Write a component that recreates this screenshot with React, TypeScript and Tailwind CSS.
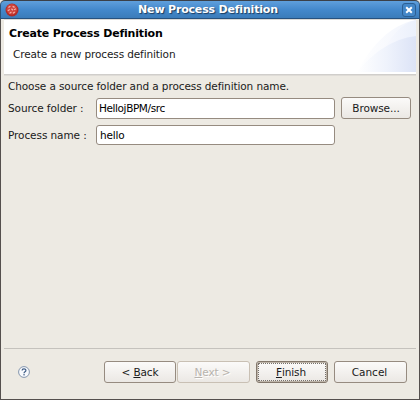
import React from "react";

const BTN =
  "flex h-[22px] shrink-0 items-center justify-center rounded-[3px] border bg-linear-to-b from-[#fbfaf9] to-[#ebe8e4] leading-none whitespace-pre";

function AppIcon() {
  return (
    <svg width="14" height="14" viewBox="0 0 14 14" className="block">
      <circle cx="7" cy="7" r="6.5" fill="#b02c28" />
      <circle cx="6.8" cy="6.3" r="5.2" fill="#d0453e" />
      <path d="M3.4 4.6 5.4 3.2M7.6 3.4 9.6 4.4M2.8 7.8 4.8 6.6M6.4 5.8 8 7.2M9 6.8 11 5.8M4.6 10.4 6.4 9M8 10.2 9.8 9" fill="none" stroke="#f2b3ad" strokeWidth="1.2" />
    </svg>
  );
}

function TitleBar() {
  return (
    <div className="flex h-[19px] shrink-0 items-center rounded-t-[5px] border-x border-t border-b border-x-[#2d5278] border-t-[#3b4048] border-b-[#27527f] bg-linear-to-b from-[#5f9fdc] via-[#4489cc] to-[#3b7cba] pr-[3px] pl-1">
      <AppIcon />
      <div className="flex-1 pr-[5px] text-center text-[11px] leading-[18px] font-bold tracking-[-0.18px] text-white [text-shadow:1px_1px_1px_#1c3c5e]">
        New Process Definition
      </div>
      <div className="flex h-[14px] w-[14px] items-center justify-center rounded-[3px] border border-[#2c5f93] bg-[#4387c8]">
        <svg width="8" height="8" viewBox="0 0 8 8">
          <path d="M1.2 1.2 6.8 6.8M6.8 1.2 1.2 6.8" stroke="#fff" strokeWidth="2" />
        </svg>
      </div>
    </div>
  );
}

function Banner() {
  return (
    <div className="flex h-[55px] shrink-0 justify-between border-t border-[#dcdad6] bg-white">
      <div className="pt-[7px] pl-[5px] leading-[13px]">
        <div className="text-[11px] font-bold tracking-[-0.18px] text-black">Create Process Definition</div>
        <div className="pt-2 pl-1 tracking-[-0.12px]">Create a new process definition</div>
      </div>
      <svg width="60" height="52" viewBox="0 0 60 52" className="block">
        <defs>
          <linearGradient id="outer" x1="0" x2="1">
            <stop offset="0" stopColor="#fff" />
            <stop offset="1" stopColor="#f1f4fc" />
          </linearGradient>
          <linearGradient id="middle" x1="0" x2="1">
            <stop offset="0" stopColor="#f8f9fe" />
            <stop offset="1" stopColor="#ebf0fb" />
          </linearGradient>
          <linearGradient id="inner" x1="0" x2="1">
            <stop offset="0" stopColor="#fff" />
            <stop offset=".5" stopColor="#eff3fc" />
            <stop offset="1" stopColor="#dce3f6" />
          </linearGradient>
        </defs>
        <path d="M1 52C15 26 34 5 60 0V52Z" fill="url(#outer)" />
        <path d="M28 30C36 15 45 4 60 0V34Z" fill="url(#middle)" />
        <path d="M1 52C18 32 36 19 60 16V52Z" fill="url(#inner)" />
      </svg>
    </div>
  );
}

function HelpIcon() {
  return (
    <svg width="12" height="12" viewBox="0 0 12 12" className="block">
      <circle cx="6" cy="6" r="5.4" fill="#f8fafd" stroke="#8495ad" strokeWidth="1" />
      <path d="M4.1 4.6C4.1 2.4 7.9 2.4 7.9 4.5 7.9 5.8 6 5.8 6 7.3" fill="none" stroke="#3d5b85" strokeWidth="1.2" />
      <rect x="5.4" y="8.1" width="1.3" height="1.3" fill="#3d5b85" />
    </svg>
  );
}

function Field({ label, children }: { label: string; children: React.ReactNode }) {
  return (
    <div className="flex items-center">
      <label className="w-[88px] leading-[13px] tracking-[-0.08px] whitespace-pre">{label}</label>
      {children}
    </div>
  );
}

const INPUT =
  "w-[239px] rounded-[3px] border border-[#968b80] bg-white px-[2px] text-black outline-none";

export default function App() {
  return (
    <div className="h-[400px] w-[420px] overflow-hidden bg-[#edeae3] font-['DejaVu_Sans',sans-serif] text-[10.5px] text-[#1a1a1a]">
      <div className="flex h-full flex-col">
        <TitleBar />
        <div className="flex min-h-0 flex-1 flex-col border-x border-b border-[#55504e] px-[3px]">
          <Banner />
          <div className="h-[2px] shrink-0 border-t border-[#d0cecb] bg-[#dfdcd7]" />
          <div className="flex-1 pt-[4px] pl-1">
            <div className="h-[17px] leading-[13px] tracking-[-0.1px] whitespace-nowrap">
              Choose a source folder and a process definition name.
            </div>
            <div className="flex h-[22px] items-center gap-[6px]">
              <Field label="Source folder :">
                <input readOnly value="HellojBPM/src" className={`${INPUT} h-[21px] tracking-[-0.4px]`} />
              </Field>
              <button className={`${BTN} w-[70px] border-[#968b80] tracking-[-0.1px]`}>Browse...</button>
            </div>
            <div className="pt-[6px]">
              <Field label="Process name :">
                <input readOnly value="hello" className={`${INPUT} h-[20px] pb-px pl-[3px] tracking-[-0.2px]`} />
              </Field>
            </div>
          </div>
          <div className="h-[51px] shrink-0 border-t border-[#c5c2bd]">
            <div className="flex items-center pt-[12px] pl-[14px]">
              <HelpIcon />
              <button className={`${BTN} ml-[74px] w-[72px] border-[#968b80] tracking-[-0.1px]`}>
                {"< "}<u>B</u>ack
              </button>
              <button className={`${BTN} ml-[1px] w-[73px] border-[#c9c0b4] pr-0.5 tracking-[-0.1px] text-[#b8b3ad] [text-shadow:1px_1px_0_#fff]`}>
                <u>N</u>{"ext >"}
              </button>
              <button className={`${BTN} ml-[6px] w-[72px] border-[#82776b] p-px shadow-[inset_0_0_0_1px_#bdb4a8]`}>
                <span className="flex h-full w-full items-center justify-center border border-dotted border-[#77716b] pr-0.5 tracking-[-0.1px]">
                  <u>F</u>inish
                </span>
              </button>
              <button className={`${BTN} ml-[6px] w-[73px] border-[#968b80] pr-0.5`}>Cancel</button>
            </div>
          </div>
        </div>
      </div>
    </div>
  );
}
